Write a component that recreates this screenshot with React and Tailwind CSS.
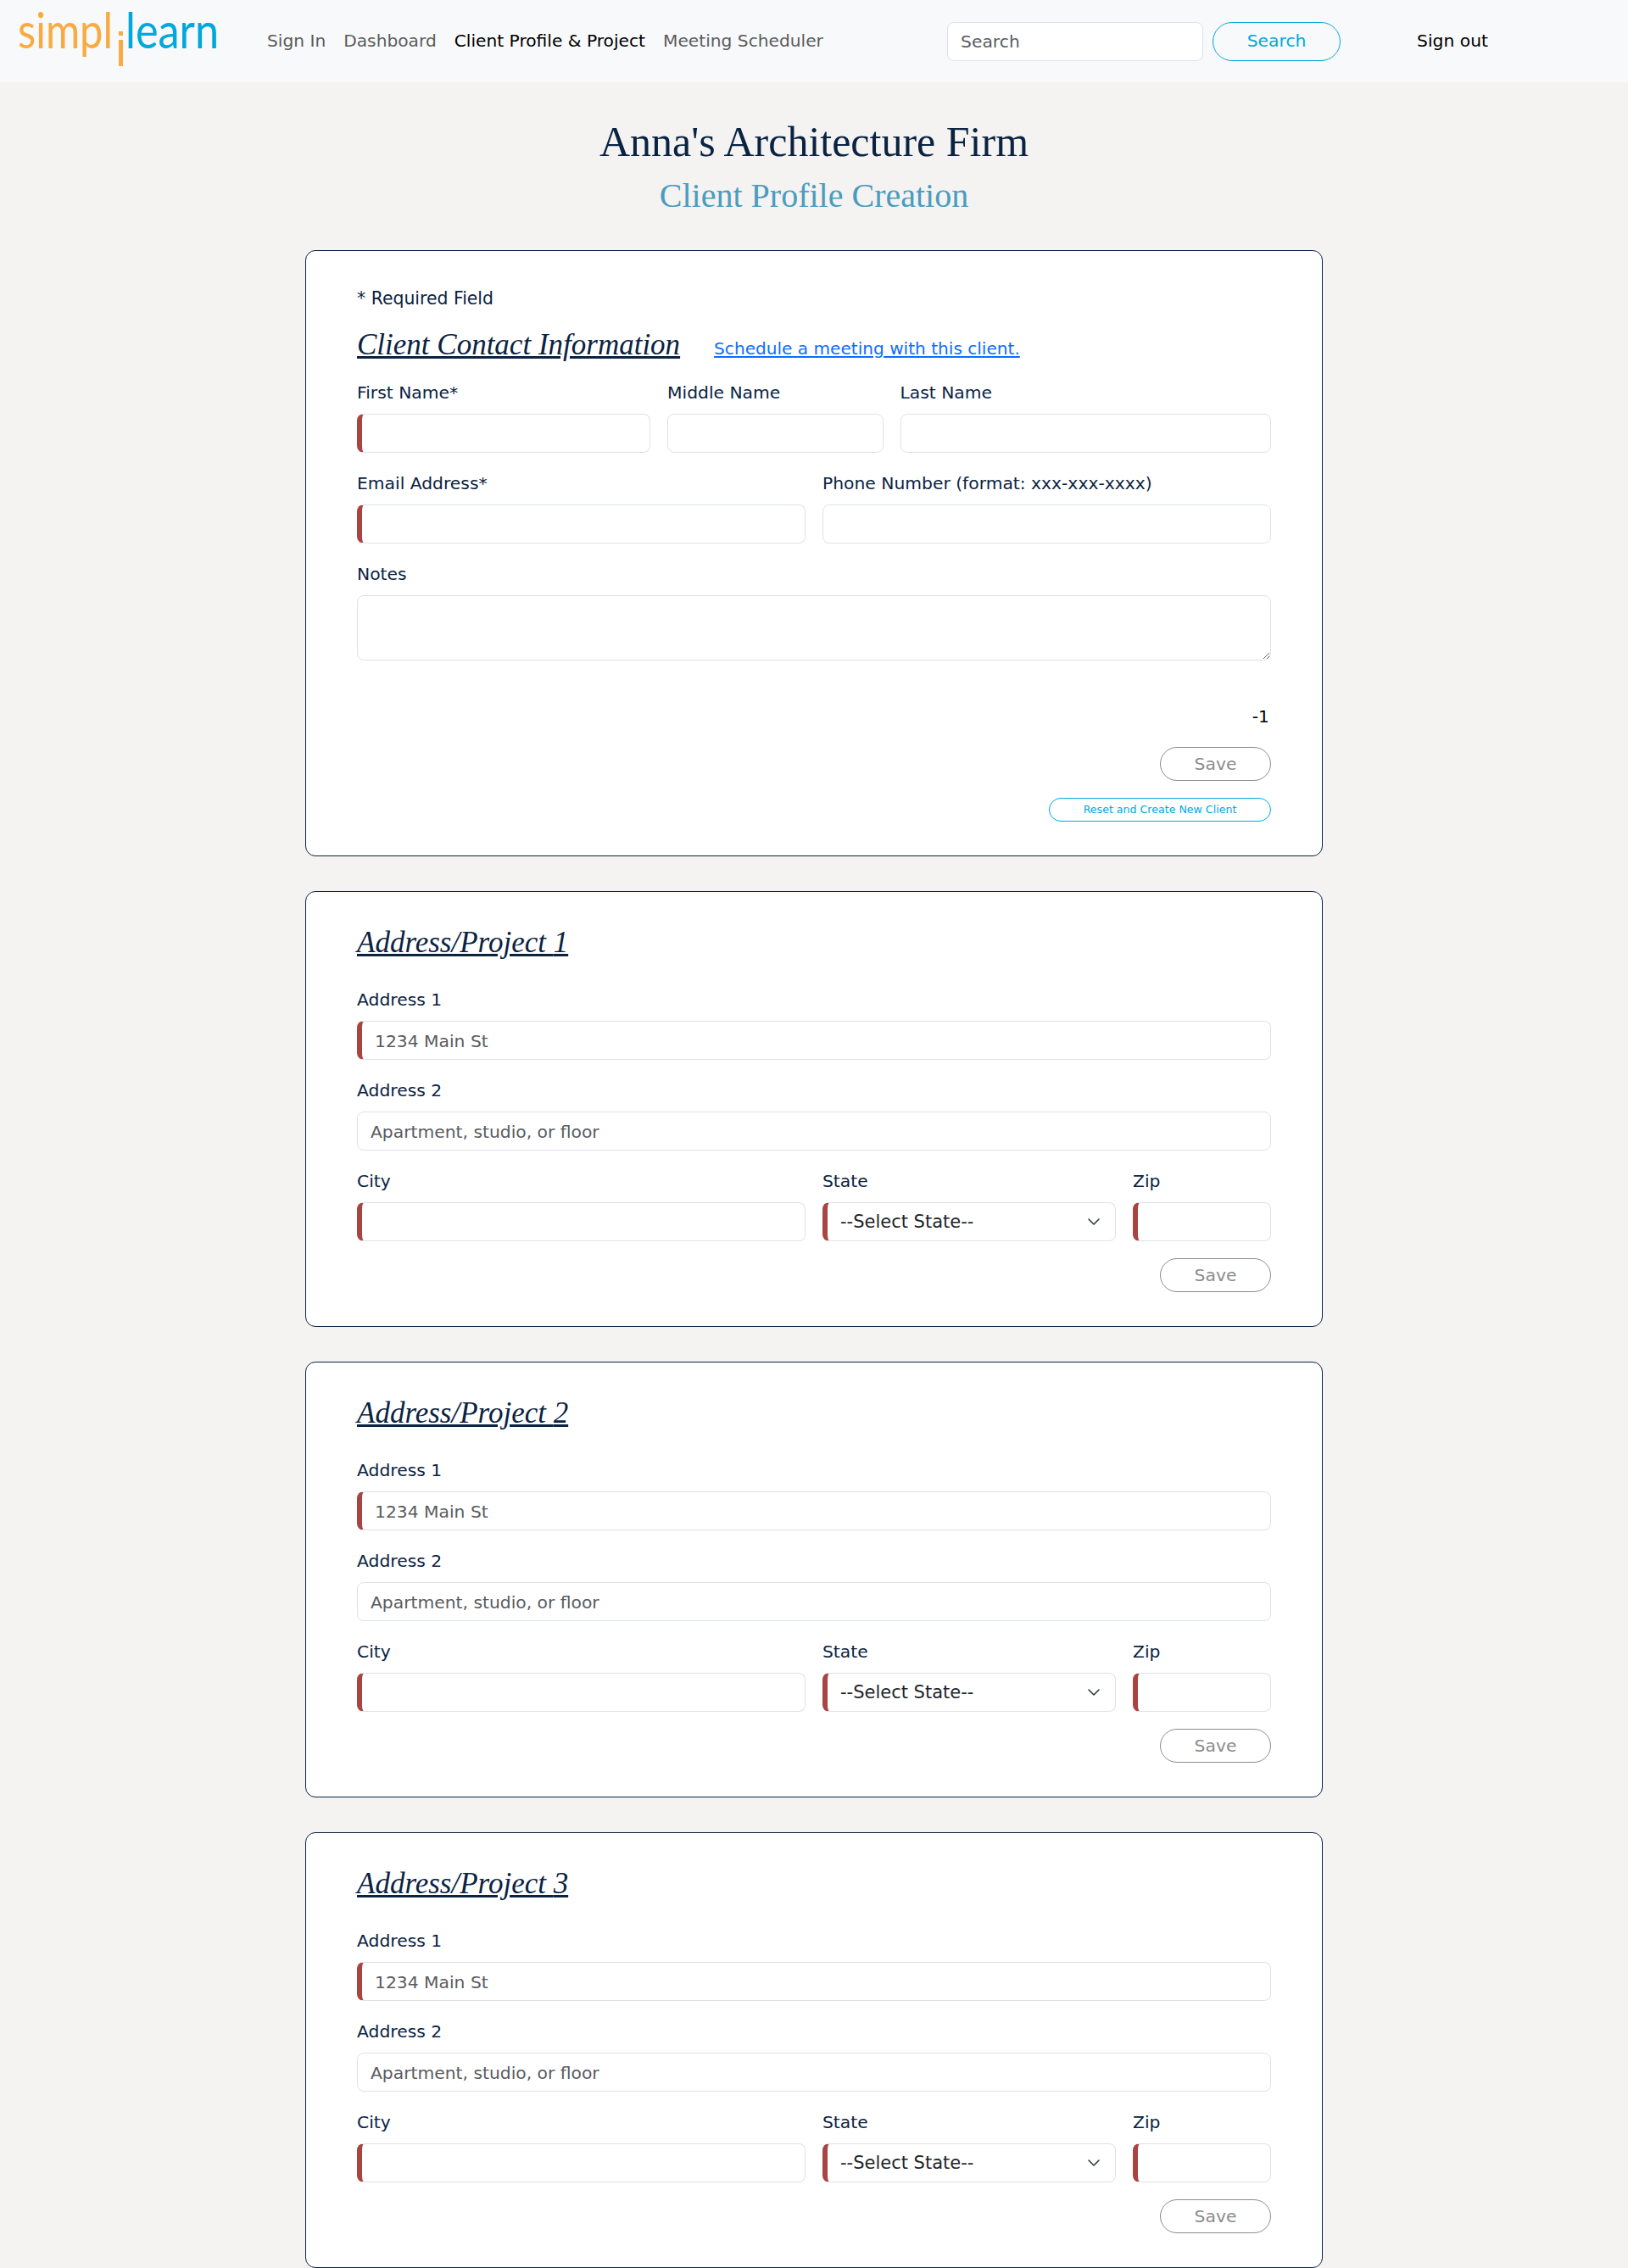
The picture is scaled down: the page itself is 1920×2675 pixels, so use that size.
import { useState } from 'react';

const sans = "font-['DejaVu_Sans',sans-serif]";
const inputBase = 'block w-full h-[46px] bg-white border border-[#dee2e6] rounded-[8px] px-[15px] pt-px text-[20.3px] text-[#212529] placeholder:text-[#595c5f] outline-none';
const required = 'border-l-[6px] border-l-[#a94442] pl-[15px]';

function Logo() {
    return (
        <svg width="280" height="97" viewBox="0 0 280 97" className="shrink-0">
            <text x="21" y="57" fontFamily="Lato, sans-serif" fontWeight="400" fontSize="58" textLength="112" lengthAdjust="spacingAndGlyphs" fill="#f9ab41">simpl</text>
            <rect x="140" y="37" width="5" height="5" fill="#f9ab41" />
            <rect x="140" y="47" width="5" height="31" fill="#f9ab41" />
            <text x="148" y="57" fontFamily="Lato, sans-serif" fontWeight="400" fontSize="58" textLength="110" lengthAdjust="spacingAndGlyphs" fill="#00a8dd">learn</text>
        </svg>
    );
}

function Navbar() {
    const links = [
        { label: 'Sign In', active: false },
        { label: 'Dashboard', active: false },
        { label: 'Client Profile & Project', active: true },
        { label: 'Meeting Scheduler', active: false },
    ];

    return (
        <nav className="h-[97px] bg-[#f8f9fa] flex items-center">
            <Logo />
            <ul className="flex items-center gap-[21px] ml-[35px] text-[20.2px]">
                {links.map((link) => (
                    <li key={link.label} className={link.active ? 'text-black' : 'text-[#5c5c5c]'}>
                        {link.label}
                    </li>
                ))}
            </ul>
            <div className="flex items-center ml-auto mr-[165px]">
                <input className={`${inputBase} !w-[302px]`} placeholder="Search" />
                <button className="w-[151px] h-[46px] ml-[11px] rounded-full border border-[#00a8dd] text-[#00a8dd] text-[20.3px]">Search</button>
                <span className="ml-[90px] text-black text-[20.3px]">Sign out</span>
            </div>
        </nav>
    );
}

function Field({ label, span, isRequired, placeholder, children }) {
    return (
        <div className={span}>
            <label className="block h-6 mb-[13px] leading-6 text-[20.3px] text-[#0a2342]">{label}</label>
            {children || <input className={`${inputBase} ${isRequired ? required : ''}`} placeholder={placeholder} />}
        </div>
    );
}

function StateSelect() {
    return (
        <div className="relative">
            <select className={`${inputBase} ${required} !text-[21px] appearance-none`} defaultValue="">
                <option value="">--Select State--</option>
                <option value="NY">New York</option>
                <option value="CA">California</option>
            </select>
            <svg className="absolute right-[18px] top-[15px] w-4 h-4 pointer-events-none" viewBox="0 0 16 16" fill="none" stroke="#343a40" strokeWidth="1.6" strokeLinecap="round" strokeLinejoin="round">
                <path d="m2 5 6 6 6-6" />
            </svg>
        </div>
    );
}

function SaveButton() {
    return (
        <button className="w-[131px] h-10 rounded-full border border-[#8c8c8c] text-[#8c8c8c] text-[20.3px] leading-none">Save</button>
    );
}

function ClientCard() {
    return (
        <section className="w-[1200px] mx-auto bg-white border border-[#0a2342] rounded-xl px-[60px] pt-[44px] pb-[40px] text-[#0a2342]">
            <p className="h-6 leading-6 text-[20.4px]">* Required Field</p>
            <div className="flex items-baseline gap-10 mt-5 mb-[21px]">
                <h2 className="font-['Liberation_Serif',serif] italic underline text-[35px] leading-[46px]">Client Contact Information</h2>
                <a href="#" className="text-[#0d6efd] underline text-[20.1px]">Schedule a meeting with this client.</a>
            </div>
            <div className="grid grid-cols-12 gap-x-5 gap-y-6">
                <Field label="First Name*" span="col-span-4" isRequired />
                <Field label="Middle Name" span="col-span-3" />
                <Field label="Last Name" span="col-span-5" />
                <Field label="Email Address*" span="col-span-6" isRequired />
                <Field label="Phone Number (format: xxx-xxx-xxxx)" span="col-span-6" />
                <Field label="Notes" span="col-span-12">
                    <textarea className={`${inputBase} !h-[77px]`} />
                </Field>
            </div>
            <p className="mt-[54px] pr-[2px] h-6 leading-6 text-right text-black text-[20.3px]">-1</p>
            <div className="flex flex-col items-end mt-[24px] gap-5">
                <SaveButton />
                <button className="w-[262px] h-7 rounded-full border border-[#00a8dd] text-[#00a8dd] text-[12.6px] leading-none">Reset and Create New Client</button>
            </div>
        </section>
    );
}

function AddressCard({ number }) {
    return (
        <section className="w-[1200px] mx-auto bg-white border border-[#0a2342] rounded-xl px-[60px] pt-[37px] pb-[40px] text-[#0a2342]">
            <h2 className="font-['Liberation_Serif',serif] italic underline text-[35px] leading-[46px] mb-8">Address/Project {number}</h2>
            <div className="grid grid-cols-12 gap-x-5 gap-y-6">
                <Field label="Address 1" span="col-span-12" isRequired placeholder="1234 Main St" />
                <Field label="Address 2" span="col-span-12" placeholder="Apartment, studio, or floor" />
                <Field label="City" span="col-span-6" isRequired />
                <Field label="State" span="col-span-4"><StateSelect /></Field>
                <Field label="Zip" span="col-span-2" isRequired />
            </div>
            <div className="flex justify-end mt-5">
                <SaveButton />
            </div>
        </section>
    );
}

export default function App() {
    const [projects] = useState([1, 2, 3]);

    return (
        <div className={`min-h-screen bg-[#f4f3f1] ${sans}`}>
            <Navbar />
            <header className="text-center font-['Liberation_Serif',serif] pt-10 pb-10">
                <h1 className="text-[50px] leading-[60px] text-[#0a2342]">Anna's Architecture Firm</h1>
                <h2 className="text-[40px] leading-[48px] mt-[10px] text-[#4b9cc0]">Client Profile Creation</h2>
            </header>
            <main className="flex flex-col gap-[41px]">
                <ClientCard />
                {projects.map((n) => (
                    <AddressCard key={n} number={n} />
                ))}
            </main>
        </div>
    );
}
